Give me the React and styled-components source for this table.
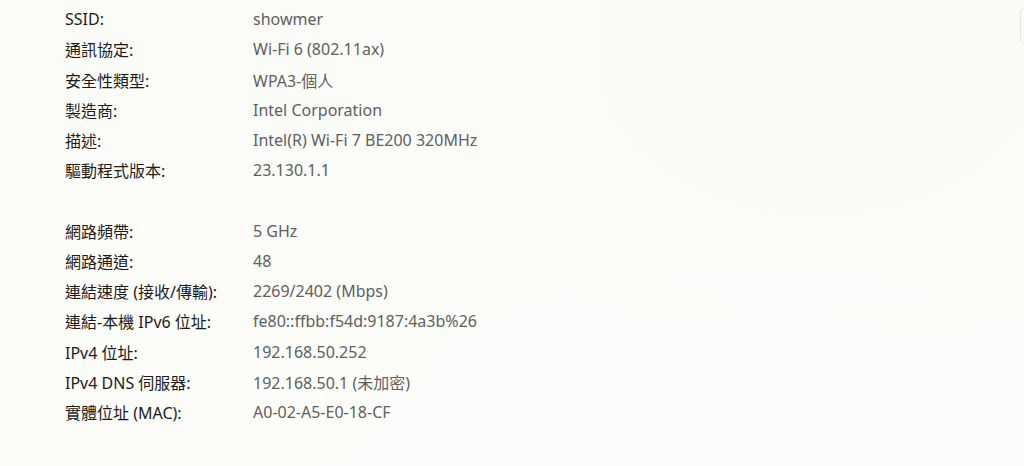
import React from "react";
import styled, { createGlobalStyle } from "styled-components";

const Global = createGlobalStyle`
  html, body { margin: 0; padding: 0; }
  body {
    width: 1024px;
    height: 466px;
    overflow: hidden;
    background: #fbfbf8;
  }
`;

const Page = styled.div`
  width: 1024px;
  height: 466px;
  overflow: hidden;
  display: flex;
  align-items: flex-start;
  background:
    radial-gradient(ellipse 420px 300px at 820px 60px, rgba(250, 250, 246, 1) 0%, rgba(250, 250, 246, 0) 100%),
    radial-gradient(ellipse 500px 260px at 760px 480px, rgba(252, 251, 253, 1) 0%, rgba(252, 251, 253, 0) 100%),
    linear-gradient(180deg, #fbfbf8 0%, #fcfcf9 100%);
  font-family: "Segoe UI", "Noto Sans", "Noto Sans CJK TC", sans-serif;
`;

const Details = styled.dl`
  margin: 0;
  padding: 4px 0 0 65px;
  display: grid;
  grid-template-columns: 188px auto;
  grid-auto-rows: 30.23px;
  align-items: center;
  font-size: 16px;
  flex: 1;
`;

const Label = styled.dt`
  margin: 0;
  color: #1b1b1b;
  white-space: nowrap;
`;

const Value = styled.dd`
  margin: 0;
  color: #5f5f5f;
  white-space: nowrap;
`;

const Spacer = styled.div`
  grid-column: 1 / -1;
`;

const CopyButton = styled.button`
  flex: none;
  margin: 8px -60px 0 0;
  width: 64px;
  height: 36px;
  border: 1px solid #e3e3e3;
  border-radius: 5px;
  background: #fdfdfd;
`;

const group1 = [
  ["SSID:", "showmer"],
  ["通訊協定:", "Wi-Fi 6 (802.11ax)"],
  ["安全性類型:", "WPA3-個人"],
  ["製造商:", "Intel Corporation"],
  ["描述:", "Intel(R) Wi-Fi 7 BE200 320MHz"],
  ["驅動程式版本:", "23.130.1.1"],
];

const group2 = [
  ["網路頻帶:", "5 GHz"],
  ["網路通道:", "48"],
  ["連結速度 (接收/傳輸):", "2269/2402 (Mbps)"],
  ["連結-本機 IPv6 位址:", "fe80::ffbb:f54d:9187:4a3b%26"],
  ["IPv4 位址:", "192.168.50.252"],
  ["IPv4 DNS 伺服器:", "192.168.50.1 (未加密)"],
  ["實體位址 (MAC):", "A0-02-A5-E0-18-CF"],
];

const Rows = ({ items }) =>
  items.map(([k, v]) => (
    <React.Fragment key={k}>
      <Label>{k}</Label>
      <Value>{v}</Value>
    </React.Fragment>
  ));

export default function App() {
  return (
    <>
      <Global />
      <Page>
        <Details>
          <Rows items={group1} />
          <Spacer />
          <Rows items={group2} />
        </Details>
        <CopyButton aria-label="複製" />
      </Page>
    </>
  );
}
